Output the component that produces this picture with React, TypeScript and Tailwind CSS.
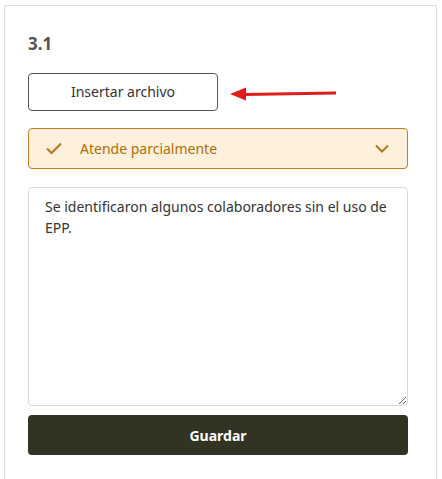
import React from "react";

export default function App() {
  return (
    <div className="w-[442px] h-[479px] bg-white overflow-hidden" style={{ fontFamily: '"Noto Sans", "Open Sans", sans-serif' }}>
      <div className="ml-[4px] mt-[5px] w-[433px] h-[480px] border border-[#dcdcdc] border-b-0 pl-[23px] pr-[28px] pt-[26px]">
        <div className="text-[17px] font-bold text-[#555] leading-[24px]">3.1</div>
        <div className="mt-[17px] flex items-center">
          <button className="w-[190px] h-[38px] border border-[#555] rounded-[4px] bg-white text-[14px] text-[#333] leading-none">
            Insertar archivo
          </button>
          <svg width="110" height="16" viewBox="0 0 110 16" className="ml-[12px] mt-[4px]">
            <line x1="14" y1="8.5" x2="106" y2="7" stroke="#e01b1b" strokeWidth="3" />
            <polygon points="0,8 16,1.5 16,14.5" fill="#e01b1b" />
          </svg>
        </div>
        <div className="mt-[17px] w-[380px] h-[41px] flex items-center border border-[#c4801f] rounded-[4px] bg-[#fdf1de] text-[#b26e00] text-[14px]">
          <svg width="16" height="13" viewBox="0 0 16 13" className="ml-[17px]">
            <path d="M1 6.5 L5.5 11 L15 1.5" fill="none" stroke="#b8741a" strokeWidth="2" />
          </svg>
          <span className="ml-[18px] flex-1">Atende parcialmente</span>
          <svg width="14" height="9" viewBox="0 0 14 9" className="mr-[18px]">
            <path d="M1 1.5 L7 7.5 L13 1.5" fill="none" stroke="#b8741a" strokeWidth="2" />
          </svg>
        </div>
        <textarea
          className="mt-[18px] block w-[380px] h-[219px] border border-[#dadada] rounded-[4px] px-[16px] py-[8px] text-[14px] leading-[21px] text-[#333] outline-none"
          style={{ fontFamily: '"Noto Sans", "Open Sans", sans-serif' }}
          defaultValue="Se identificaron algunos colaboradores sin el uso de EPP."
        />
        <button className="mt-[9px] block w-[380px] h-[40px] rounded-[4px] bg-[#323323] text-white text-[14px] font-bold">
          Guardar
        </button>
      </div>
    </div>
  );
}
